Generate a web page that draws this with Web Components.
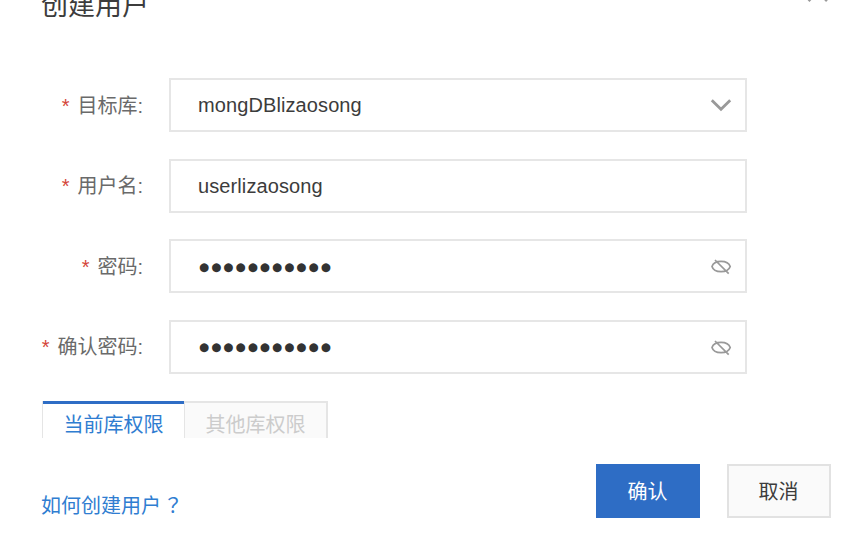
<!DOCTYPE html>
<html lang="zh-CN">
<head>
<meta charset="utf-8">
<title>创建用户</title>
<style>
html,body{margin:0;height:100%;overflow:hidden;background:#fff}
body{font-family:"Liberation Sans","Noto Sans CJK SC",sans-serif;font-size:20px;color:#3c3c3c}
</style>
</head>
<body>
<user-dialog></user-dialog>
<script>
const define = (name, html) => {
  const t = document.createElement('template');
  t.innerHTML = html;
  customElements.define(name, class extends HTMLElement {
    constructor() {
      super();
      this.attachShadow({mode: 'open'}).append(t.content.cloneNode(true));
    }
  });
};

define('form-row', `<style>
:host{display:grid;grid-template-columns:143px 578px;column-gap:26px;height:54px;align-items:center}
.label{display:flex;justify-content:flex-end;color:#6a6a6a;line-height:30px;white-space:nowrap;padding-top:1px}
.star{color:#d4453a;margin-right:8px}
.box{box-sizing:border-box;height:54px;border:2px solid #e6e6e6;padding:0 13px 0 27px;display:flex;align-items:center;justify-content:space-between;line-height:30px;letter-spacing:.1px}
</style><div class="label"><span class="star">*</span><slot name="label"></slot></div>
<div class="box"><slot></slot><slot name="icon"></slot></div>`);

define('secret-value', `<style>
:host{display:block;font:11.6px/30px "DejaVu Sans",sans-serif;letter-spacing:2.05px;color:#333;padding:1px 0 0 1px}
</style><slot></slot>`);

define('chevron-icon', `<style>:host{display:block;width:22px;height:22px}svg{display:block}</style>
<svg width="22" height="22" viewBox="0 0 22 22"><path d="M1.8 6.3 11 15.3 20.2 6.3" fill="none" stroke="#999" stroke-width="2.8"/></svg>`);

define('hidden-eye-icon', `<style>:host{display:block;width:22px;height:22px}svg{display:block}</style>
<svg width="22" height="22" viewBox="0 0 22 22" fill="none" stroke="#999" stroke-width="1.7"><path d="M2 11.5C4 4.6 18 4.6 20.2 11.5C18 18.4 4 18.4 2 11.5ZM5 5 18.7 18.7"/></svg>`);

define('tab-item', `<style>
:host{display:block;box-sizing:border-box;height:37px;width:143px;border:solid #e5e5e5;border-width:2px 2px 0 0;background:#fafafa;color:#ccc;text-align:center;line-height:30px;padding-top:7px}
:host([active]){width:143px;background:#fff;color:#2f7dd1;border-width:0 1px 0 1px;background:linear-gradient(#2e6dc5 3px,#fff 3px);padding-top:9px;background-origin:border-box}
</style><slot></slot>`);

define('push-button', `<style>
:host{display:block;box-sizing:border-box;width:104px;height:54px;border:2px solid #e2e2e2;background:#fafafa;color:#3c3c3c;text-align:center;line-height:53px}
:host([primary]){background:#2e6dc5;border-color:#2e6dc5;color:#fff}
</style><slot></slot>`);

define('user-dialog', `<style>
:host{display:block;width:841px;height:537px;overflow:hidden;background:#fff}
header{display:flex;justify-content:space-between;height:78px;padding:0 11px 0 41px}
h1{font-size:27px;font-weight:400;line-height:40px;margin:-14px 0 0;color:#3c3c3c}
header svg{margin-top:-20px}
.rows{display:grid;row-gap:26.67px}
.tabs{display:flex;margin:27px 0 0 42px;height:37px}
footer{display:flex;align-items:flex-start;padding:26px 10.5px 0 41px}
a{color:#2f7dd1;margin:26px auto 0 0;line-height:30px;text-spacing-trim:space-all}
.mark{font-family:"Noto Sans CJK TC",sans-serif;margin-left:2px}
push-button+push-button{margin-left:27px}
</style>
<header><h1>创建用户</h1><svg width="24" height="24" viewBox="0 0 24 24"><path d="M2.5 2.5 21 21M21 2.5 2.5 21" stroke="#999" stroke-width="2.6"/></svg></header>
<div class="rows">
<form-row><span slot="label">目标库:</span><span>mongDBlizaosong</span><chevron-icon slot="icon"></chevron-icon></form-row>
<form-row><span slot="label">用户名:</span><span>userlizaosong</span></form-row>
<form-row><span slot="label">密码:</span><secret-value>●●●●●●●●●●●</secret-value><hidden-eye-icon slot="icon"></hidden-eye-icon></form-row>
<form-row><span slot="label">确认密码:</span><secret-value>●●●●●●●●●●●</secret-value><hidden-eye-icon slot="icon"></hidden-eye-icon></form-row>
</div>
<div class="tabs"><tab-item active>当前库权限</tab-item><tab-item>其他库权限</tab-item></div>
<footer><a>如何创建用户<span class="mark" lang="zh-TW">？</span></a><push-button primary>确认</push-button><push-button>取消</push-button></footer>`);
</script>
</body>
</html>
